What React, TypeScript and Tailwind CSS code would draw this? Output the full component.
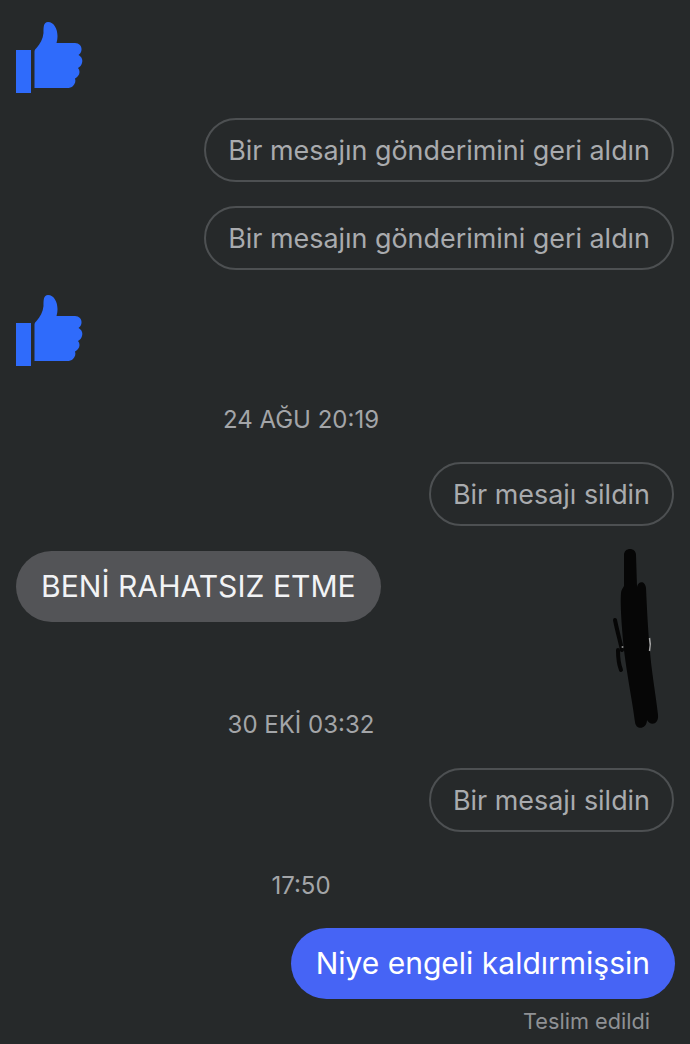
import React from 'react';

const ThumbIcon: React.FC = () => (
    <svg width="68" height="72" viewBox="0 0 68 72" className="block">
        <rect x="0" y="28" width="15" height="43" fill="#2f6bfb" />
        <path
            fill="#2f6bfb"
            d="M18.5 66 V29.5 C18.5 28 19.5 27 20.5 26 C24 22 27 17 27.5 11 C27.5 5 27.5 0 32 0 C38 0 41.5 7 41.5 14 C41.5 17 41 19 40.5 21 L59 21 C63 21 66 24 65.5 28 C65.3 30 64 32 62.5 33 C66 35 67 38 66 41 C65.5 43 64 45 62 46 C64 48 64 52 62 54 C61 55 60 56 59 56.5 C60 59 59 62 57 64 C55.5 65.5 53.5 66 51 66 Z"
        />
    </svg>
);

// marker strokes scrawled over the sender's avatar
const Scribble: React.FC = () => (
    <svg width="60" height="190" viewBox="0 0 60 190" className="absolute left-[610px] top-[545px]">
        <path
            fill="#060606"
            d="M14 10 C14 2 26 2 26 10 L27 42 C28 36 35 35 36 43 C37 65 38 85 39.5 100 C41 125 46 150 48 170 C49 180 40 181 37 175 C37 184 26 186 25 177 C23 160 17 130 14 105 C12 85 10 60 11 48 C11 45 13 43 14 41 Z"
        />
        <g fill="none" stroke="#060606" strokeLinecap="round">
            <path strokeWidth="4" d="M5 75 C7 85 10 96 12 105" />
            <path strokeWidth="4" d="M8 105 C8 113 9 120 11 125" />
        </g>
        <path d="M39.5 93 C40.5 97 40.5 102 39.5 106" fill="none" stroke="#a8a8a8" strokeWidth="1.5" />
        <circle cx="12.5" cy="102" r="1" fill="#8a8a8a" />
    </svg>
);

const UnsentPill: React.FC<{ text: string; className: string }> = ({ text, className }) => (
    <div className={`self-end mr-4 h-16 rounded-full border-2 border-[#4d5052] px-[22px] flex items-center text-[26.9px] text-[#a9abae] ${className}`}>
        {text}
    </div>
);

const TimeLabel: React.FC<{ text: string; className: string }> = ({ text, className }) => (
    <div className={`w-[602px] text-center text-[24px] leading-7 text-[#a3a5a8] ${className}`}>{text}</div>
);

const App: React.FC = () => {
    return (
        <div className="relative w-[690px] h-[1044px] overflow-hidden bg-[#26292a] font-['Inter',sans-serif] flex flex-col">
            <div className="ml-4 mt-[22px]">
                <ThumbIcon />
            </div>
            <UnsentPill text="Bir mesajın gönderimini geri aldın" className="mt-[24px]" />
            <UnsentPill text="Bir mesajın gönderimini geri aldın" className="mt-[24px]" />
            <div className="ml-4 mt-[25px]">
                <ThumbIcon />
            </div>
            <TimeLabel text="24 AĞU 20:19" className="mt-[39px]" />
            <UnsentPill text="Bir mesajı sildin" className="mt-[28px]" />
            <div className="ml-4 mt-[25px] self-start h-[71px] rounded-full bg-[#535457] px-[25px] flex items-center text-[30.1px] text-[#f2f3f5]">
                BENİ RAHATSIZ ETME
            </div>
            <TimeLabel text="30 EKİ 03:32" className="mt-[89px]" />
            <UnsentPill text="Bir mesajı sildin" className="mt-[29px]" />
            <TimeLabel text="17:50" className="mt-[40px]" />
            <div className="self-end mr-[15px] mt-[28px] h-[71px] rounded-full bg-[#4664f5] px-[25px] flex items-center text-[30px] text-white">
                Niye engeli kaldırmişsin
            </div>
            <div className="self-end mr-10 mt-2 text-[21.7px] leading-7 text-[#8f9194]">Teslim edildi</div>
            <Scribble />
        </div>
    );
};

export default App;
